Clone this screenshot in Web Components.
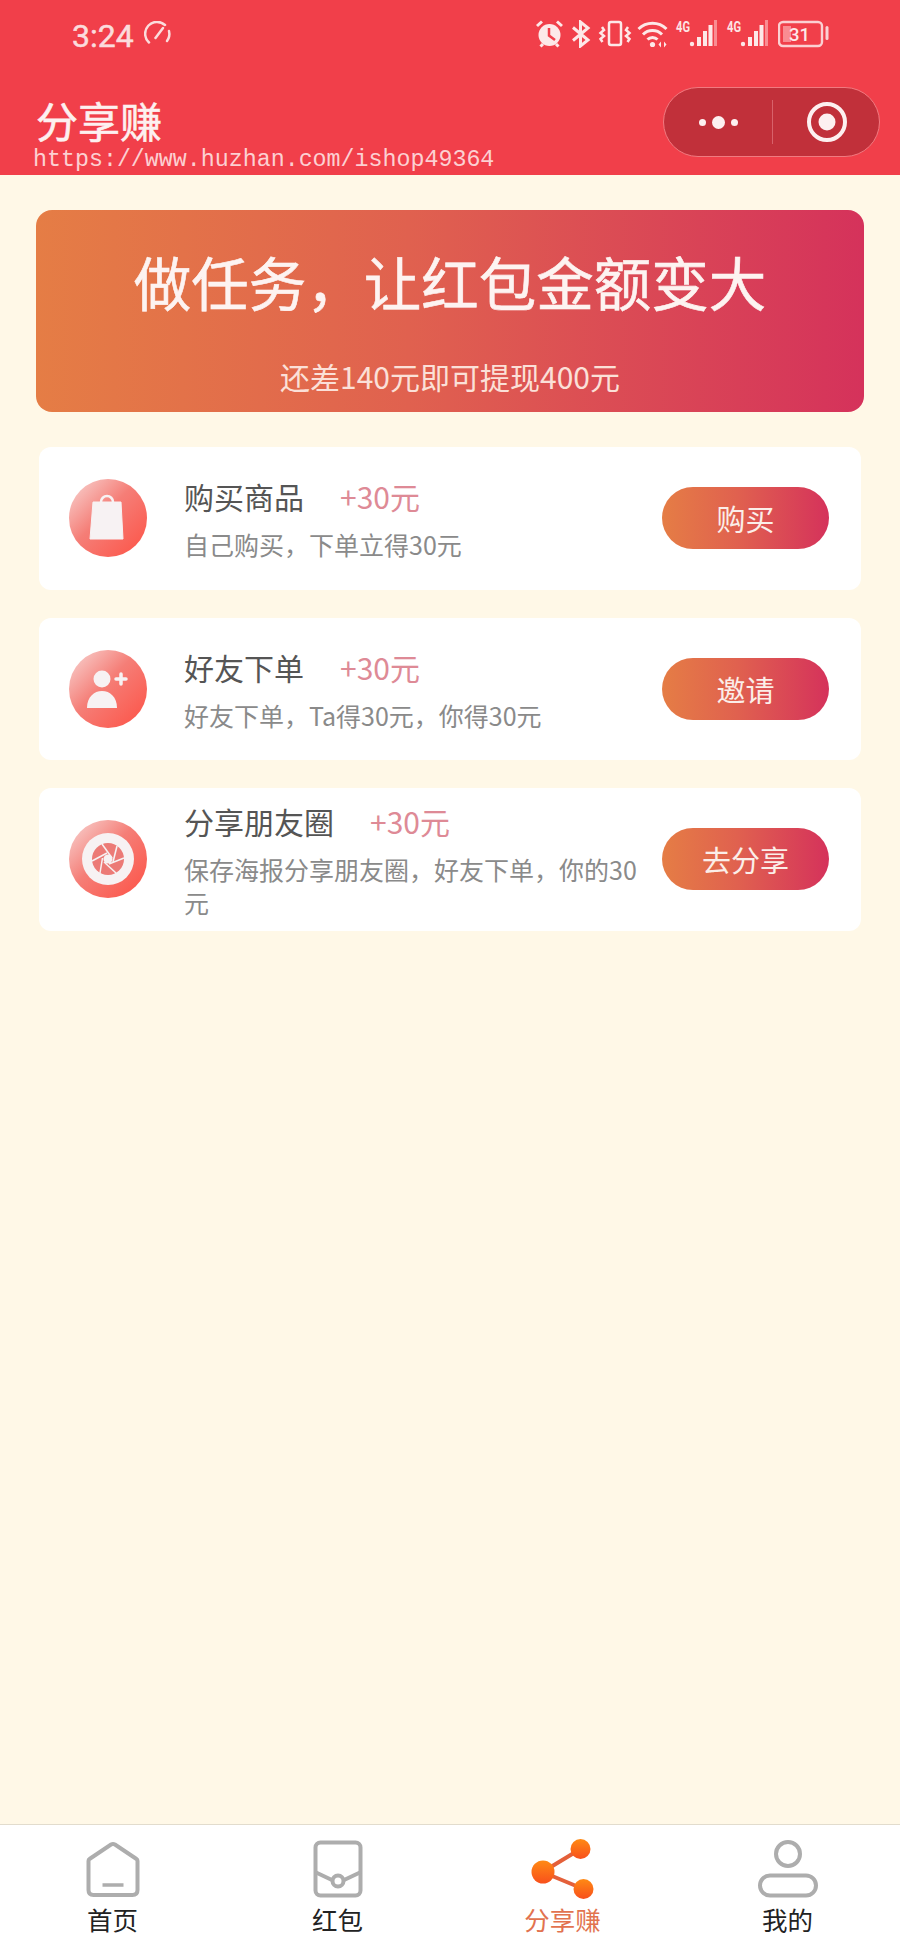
<!DOCTYPE html>
<html lang="zh">
<head>
<meta charset="utf-8">
<title>分享赚</title>
<style>
  html, body { margin: 0; padding: 0; background: #fff8e7; }
  body { font-family: "Noto Sans CJK SC", "Noto Sans", sans-serif; }
</style>
</head>
<body>
<share-app>
  <status-bar slot="top"></status-bar>
  <title-bar slot="top" heading="分享赚"></title-bar>

  <reward-banner heading="做任务，让红包金额变大" note="还差140元即可提现400元"></reward-banner>

  <task-card heading="购买商品" reward="+30元" desc="自己购买，下单立得30元" action="购买">
    <svg slot="icon" width="78" height="78" viewBox="0 0 78 78">
      <path d="M32 24 V23 a6 6 0 0 1 12 0 V24" fill="none" stroke="#f7f2f3" stroke-width="2.500"/>
      <path d="M24 23 H52 L54 60 H21 Z" fill="#f7f2f3" stroke="#f7f2f3" stroke-linejoin="round"/>
    </svg>
  </task-card>
  <task-card heading="好友下单" reward="+30元" desc="好友下单，Ta得30元，你得30元" action="邀请">
    <svg slot="icon" width="78" height="78" viewBox="0 0 78 78">
      <circle cx="33" cy="29" r="8.500" fill="#f7f2f3"/>
      <path d="M18 58 C18 47 25 41 33 41 C41 41 48 47 48 58 Z" fill="#f7f2f3"/>
      <path d="M52 24 V34 M47 29 H57" stroke="#f7f2f3" stroke-width="3.500" stroke-linecap="round"/>
    </svg>
  </task-card>
  <task-card heading="分享朋友圈" reward="+30元" desc="保存海报分享朋友圈，好友下单，你的30元" action="去分享">
    <svg slot="icon" width="78" height="78" viewBox="0 0 78 78">
      <circle cx="39" cy="39" r="26" fill="#f7f2f3"/>
      <circle cx="39" cy="39" r="16" fill="#ec7a76"/>
      <g stroke="#f7f2f3" stroke-width="1.500">
        <path d="M33 24 L43 38"/><path d="M48 26 L44 42"/><path d="M55 38 L40 44"/>
        <path d="M47 53 L35 42"/><path d="M31 53 L33.500 38"/><path d="M23 41 L38 33"/>
      </g>
      <circle cx="39" cy="39" r="4.500" fill="#f7f2f3"/>
    </svg>
  </task-card>

  <tab-bar slot="bottom">
    <tab-item label="首页">
      <svg width="70" height="60" viewBox="0 0 70 60" fill="none" stroke="#adadad" stroke-width="4">
        <path d="M33 5.500 q2 -1 4 0 L58.500 20 q1 .6 1 2 V51 q0 5 -5 5 H15.500 q-5 0 -5 -5 V22 q0 -1.400 1 -2 Z"/>
        <path d="M24.500 46 H45.500" stroke-width="3.500"/>
      </svg>
    </tab-item>
    <tab-item label="红包">
      <svg width="70" height="60" viewBox="0 0 70 60" fill="none" stroke="#adadad" stroke-width="4">
        <rect x="12.500" y="3.500" width="45" height="53" rx="5"/>
        <path d="M12 33 L30 41.500 M40 41.500 L58 33"/>
        <circle cx="35" cy="42" r="5.500"/>
      </svg>
    </tab-item>
    <tab-item label="分享赚" active>
      <svg width="70" height="60" viewBox="0 0 70 60">
        <defs>
          <linearGradient id="shareFill" x1="0" y1="0" x2="0" y2="1">
            <stop offset="0" stop-color="#ff8a14"/>
            <stop offset="1" stop-color="#f8501c"/>
          </linearGradient>
        </defs>
        <path d="M14.500 33 L52.500 10 M14.500 33 L55.500 50" stroke="#e4603a" stroke-width="4"/>
        <circle cx="15" cy="33" r="11.500" fill="url(#shareFill)"/>
        <circle cx="52.500" cy="10" r="10" fill="url(#shareFill)"/>
        <circle cx="55.500" cy="50" r="10" fill="url(#shareFill)"/>
      </svg>
    </tab-item>
    <tab-item label="我的">
      <svg width="70" height="60" viewBox="0 0 70 60" fill="none" stroke="#adadad" stroke-width="4">
        <circle cx="35" cy="15" r="12"/>
        <rect x="7" y="36.500" width="56" height="20" rx="10"/>
      </svg>
    </tab-item>
  </tab-bar>
</share-app>

<script>
(function() {
    const CJK = '"Noto Sans CJK SC", "Noto Sans", sans-serif';
    const GRADIENT = 'linear-gradient(90deg, #e57d45 0%, #e0614f 45%, #d5325b 100%)';

    class ShareApp extends HTMLElement {
        constructor() {
            super();
            this.attachShadow({ mode: 'open' });
            this.shadowRoot.innerHTML = `
                <style>
                    :host { display: flex; flex-direction: column; width: 900px; height: 1950px; background: #fff8e7; font-family: ${CJK}; }
                    header { position: relative; flex: none; height: 175px; background: #f13f4a; display: flex; flex-direction: column; }
                    .mark {
                        position: absolute; left: 33px; top: 145px;
                        font: 23.300px/30px "Liberation Mono", monospace;
                        color: rgba(255, 236, 236, 0.85); white-space: nowrap;
                    }
                    main { flex: 1; padding: 35px 36px 0; display: flex; flex-direction: column; gap: 28px; }
                    footer { flex: none; }
                </style>
                <header>
                    <slot name="top"></slot>
                    <div class="mark">https://www.huzhan.com/ishop49364</div>
                </header>
                <main><slot></slot></main>
                <footer><slot name="bottom"></slot></footer>
            `;
        }
    }

    class StatusBar extends HTMLElement {
        constructor() {
            super();
            this.attachShadow({ mode: 'open' });
            // signal icon is used twice
            const signal = `
                <svg class="sig" width="42" height="28" viewBox="0 0 42 28">
                    <text x="1" y="12" font-family="Roboto, sans-serif" font-size="14" font-weight="700" fill="#fde4e4" textLength="14" lengthAdjust="spacingAndGlyphs">4G</text>
                    <circle cx="17" cy="24" r="2.200" fill="#fde8e8"/>
                    <rect x="22" y="17" width="4" height="9" fill="#fde8e8"/>
                    <rect x="28" y="11" width="4" height="15" fill="#fde8e8"/>
                    <rect x="33.500" y="5" width="4" height="21" fill="#fde8e8"/>
                    <rect x="39" y="0" width="3" height="26" fill="#f98c92"/>
                </svg>`;
            this.shadowRoot.innerHTML = `
                <style>
                    :host { display: flex; flex: none; height: 68px; margin-bottom: 2px; padding: 0 71px 0 72px; align-items: center; justify-content: space-between; box-sizing: border-box; color: #fbdcdc; }
                    .left, .right { display: flex; align-items: center; }
                    .time { font: 400 32px/40px Roboto, sans-serif; -webkit-text-stroke: 0.5px #fbdcdc; margin-top: 3px; }
                    .left svg { margin-left: 10px; }
                    .right { gap: 7px; }
                    .wifi { margin-left: -2px; }
                    .sig { margin-left: -1px; }
                    .sig + .sig { margin-left: 2px; }
                    .batt { margin-left: 3px; }
                    svg { display: block; }
                </style>
                <div class="left">
                    <span class="time">3:24</span>
                    <svg width="28" height="26" viewBox="0 0 28 26" fill="none" stroke="#fbdcdc" stroke-width="2.500" stroke-linecap="round">
                        <path d="M5 21.500 A11.500 11.500 0 0 1 21 4"/>
                        <path d="M25 10 A12 12 0 0 1 23 20"/>
                        <path d="M11.500 17 L19 7"/>
                    </svg>
                </div>
                <div class="right">
                    <svg width="30" height="28" viewBox="0 0 30 28">
                        <circle cx="15.500" cy="15" r="11" fill="#fde8e8"/>
                        <path d="M15 8 V15.500 L21 20" fill="none" stroke="#f13f4a" stroke-width="2.500"/>
                        <path d="M3 6 L8 1.500 M28 6 L23 1.500 M6.500 26.500 L9 24 M24.500 26.500 L22 24" stroke="#fde8e8" stroke-width="3"/>
                    </svg>
                    <svg width="20" height="28" viewBox="0 0 20 28" fill="none" stroke="#fde8e8" stroke-width="3">
                        <path d="M2 7.500 L17 20 L9.500 26 V2 L17 8 L2 20.500"/>
                    </svg>
                    <svg width="34" height="28" viewBox="0 0 34 28" fill="none" stroke="#fde8e8" stroke-width="2.500">
                        <rect x="11" y="2" width="12" height="23" rx="2"/>
                        <path d="M4 7 L6 10 L2.500 13 L6 16 L2.500 19 L4.500 22"/>
                        <path d="M30 7 L28 10 L31.500 13 L28 16 L31.500 19 L29.500 22"/>
                    </svg>
                    <svg class="wifi" width="32" height="28" viewBox="0 0 32 28" fill="none" stroke="#fde8e8" stroke-width="3">
                        <path d="M1.500 9 A20 20 0 0 1 29.500 9"/>
                        <path d="M6 14.500 A13.500 13.500 0 0 1 25 14.500"/>
                        <path d="M10.500 19.500 A7 7 0 0 1 20.500 19.500"/>
                        <circle cx="15.500" cy="24.500" r="2.600" fill="#fde8e8" stroke="none"/>
                        <path d="M24 21.500 L21.500 24.500 L24 27.500 Z M27 21.500 L29.500 24.500 L27 27.500 Z" fill="#fde8e8" stroke="none"/>
                    </svg>
                    ${signal}
                    ${signal}
                    <svg class="batt" width="51" height="28" viewBox="0 0 51 28">
                        <rect x="1" y="2" width="43" height="24" rx="4" fill="none" stroke="#fbd0d2" stroke-width="2.400"/>
                        <rect x="5" y="6" width="8" height="16" fill="#f98c92"/>
                        <text x="11" y="21" font-family="Roboto, sans-serif" font-size="18.500" font-weight="500" fill="#fde8e8">31</text>
                        <rect x="47.500" y="6" width="3" height="14" rx="1.500" fill="#fbd0d2"/>
                    </svg>
                </div>
            `;
        }
    }

    class TitleBar extends HTMLElement {
        constructor() {
            super();
            this.attachShadow({ mode: 'open' });
            this.shadowRoot.innerHTML = `
                <style>
                    :host { display: flex; flex: none; height: 70px; margin-top: 17px; padding: 0 20px 0 36px; align-items: center; justify-content: space-between; box-sizing: border-box; }
                    .title { font: 400 42px/60px ${CJK}; -webkit-text-stroke: 0.6px #fdf0f0; color: #fdf0f0; margin-bottom: 4px; }
                    .capsule { display: flex; align-items: center; width: 217px; height: 70px; box-sizing: border-box; border: 1px solid #f17a80; border-radius: 35px; background: #c1303a; }
                    .more { width: 108px; display: flex; justify-content: center; align-items: center; gap: 6px; }
                    .more i { display: block; width: 7px; height: 7px; border-radius: 50%; background: #fdf0f0; }
                    .more i.big { width: 13px; height: 13px; }
                    .line { width: 1px; height: 44px; background: #d8616a; }
                    .close { flex: 1; display: flex; justify-content: center; padding-left: 2px; }
                    svg { display: block; }
                </style>
                <span class="title">${this.getAttribute('heading')}</span>
                <div class="capsule">
                    <div class="more"><i></i><i class="big"></i><i></i></div>
                    <div class="line"></div>
                    <div class="close">
                        <svg width="42" height="42" viewBox="0 0 42 42">
                            <circle cx="21" cy="21" r="18" fill="none" stroke="#fdf0f0" stroke-width="4"/>
                            <circle cx="21" cy="21" r="8.500" fill="#fdf0f0"/>
                        </svg>
                    </div>
                </div>
            `;
        }
    }

    class RewardBanner extends HTMLElement {
        constructor() {
            super();
            this.attachShadow({ mode: 'open' });
            this.shadowRoot.innerHTML = `
                <style>
                    :host { display: flex; flex-direction: column; align-items: center; flex: none; height: 202px; margin-bottom: 7px; border-radius: 16px; background: ${GRADIENT}; color: #fdf3f1; }
                    .big { font: 400 57.500px/70px ${CJK}; -webkit-text-stroke: 0.6px #fdf3f1; margin-top: 36px; }
                    .small { font: 400 30px/40px ${CJK}; margin-top: 40px; color: #fbe0d8; }
                </style>
                <div class="big">${this.getAttribute('heading')}</div>
                <div class="small">${this.getAttribute('note')}</div>
            `;
        }
    }

    class TaskCard extends HTMLElement {
        constructor() {
            super();
            this.attachShadow({ mode: 'open' });
            this.shadowRoot.innerHTML = `
                <style>
                    :host { display: flex; flex: none; height: 142.500px; margin: 0 3px; padding: 0 32px 0 30px; align-items: center; box-sizing: border-box; background: #fff; border-radius: 12px; }
                    .icon { flex: none; width: 78px; height: 78px; border-radius: 50%; background: linear-gradient(135deg, #f8d8d6 0%, #f57e77 45%, #fb5d52 85%); margin-right: 37px; }
                    ::slotted(svg) { display: block; }
                    .text { flex: 1; min-width: 0; padding-right: 22px; }
                    .top { display: flex; gap: 36px; height: 46px; align-items: center; margin: -2px 0 9px; }
                    .name { font: 400 30px/46px ${CJK}; color: #555; white-space: nowrap; }
                    .reward { font: 400 30px/46px ${CJK}; color: #de8a96; white-space: nowrap; }
                    .desc { font: 400 25px/33px ${CJK}; color: #8a8a8a; }
                    .btn { flex: none; width: 167px; height: 62px; border-radius: 31px; background: ${GRADIENT}; color: #fbeee9; font: 400 29px/62px ${CJK}; text-align: center; }
                </style>
                <div class="icon"><slot name="icon"></slot></div>
                <div class="text">
                    <div class="top"><span class="name">${this.getAttribute('heading')}</span><span class="reward">${this.getAttribute('reward')}</span></div>
                    <div class="desc">${this.getAttribute('desc')}</div>
                </div>
                <div class="btn">${this.getAttribute('action')}</div>
            `;
        }
    }

    class TabBar extends HTMLElement {
        constructor() {
            super();
            this.attachShadow({ mode: 'open' });
            this.shadowRoot.innerHTML = `
                <style>
                    :host { display: grid; grid-template-columns: repeat(4, 1fr); height: 126px; box-sizing: border-box; border-top: 1px solid #e2dccd; background: #fff; padding-top: 14px; }
                </style>
                <slot></slot>
            `;
        }
    }

    class TabItem extends HTMLElement {
        constructor() {
            super();
            this.attachShadow({ mode: 'open' });
            const color = this.hasAttribute('active') ? '#e2734f' : '#222';
            this.shadowRoot.innerHTML = `
                <style>
                    :host { display: flex; flex-direction: column; align-items: center; }
                    .icon { height: 60px; }
                    ::slotted(svg) { display: block; }
                    .label { font: 400 25.500px/36px ${CJK}; color: ${color}; margin-top: 2px; }
                </style>
                <div class="icon"><slot></slot></div>
                <div class="label">${this.getAttribute('label')}</div>
            `;
        }
    }

    customElements.define('share-app', ShareApp);
    customElements.define('status-bar', StatusBar);
    customElements.define('title-bar', TitleBar);
    customElements.define('reward-banner', RewardBanner);
    customElements.define('task-card', TaskCard);
    customElements.define('tab-bar', TabBar);
    customElements.define('tab-item', TabItem);
})();
</script>
</body>
</html>
